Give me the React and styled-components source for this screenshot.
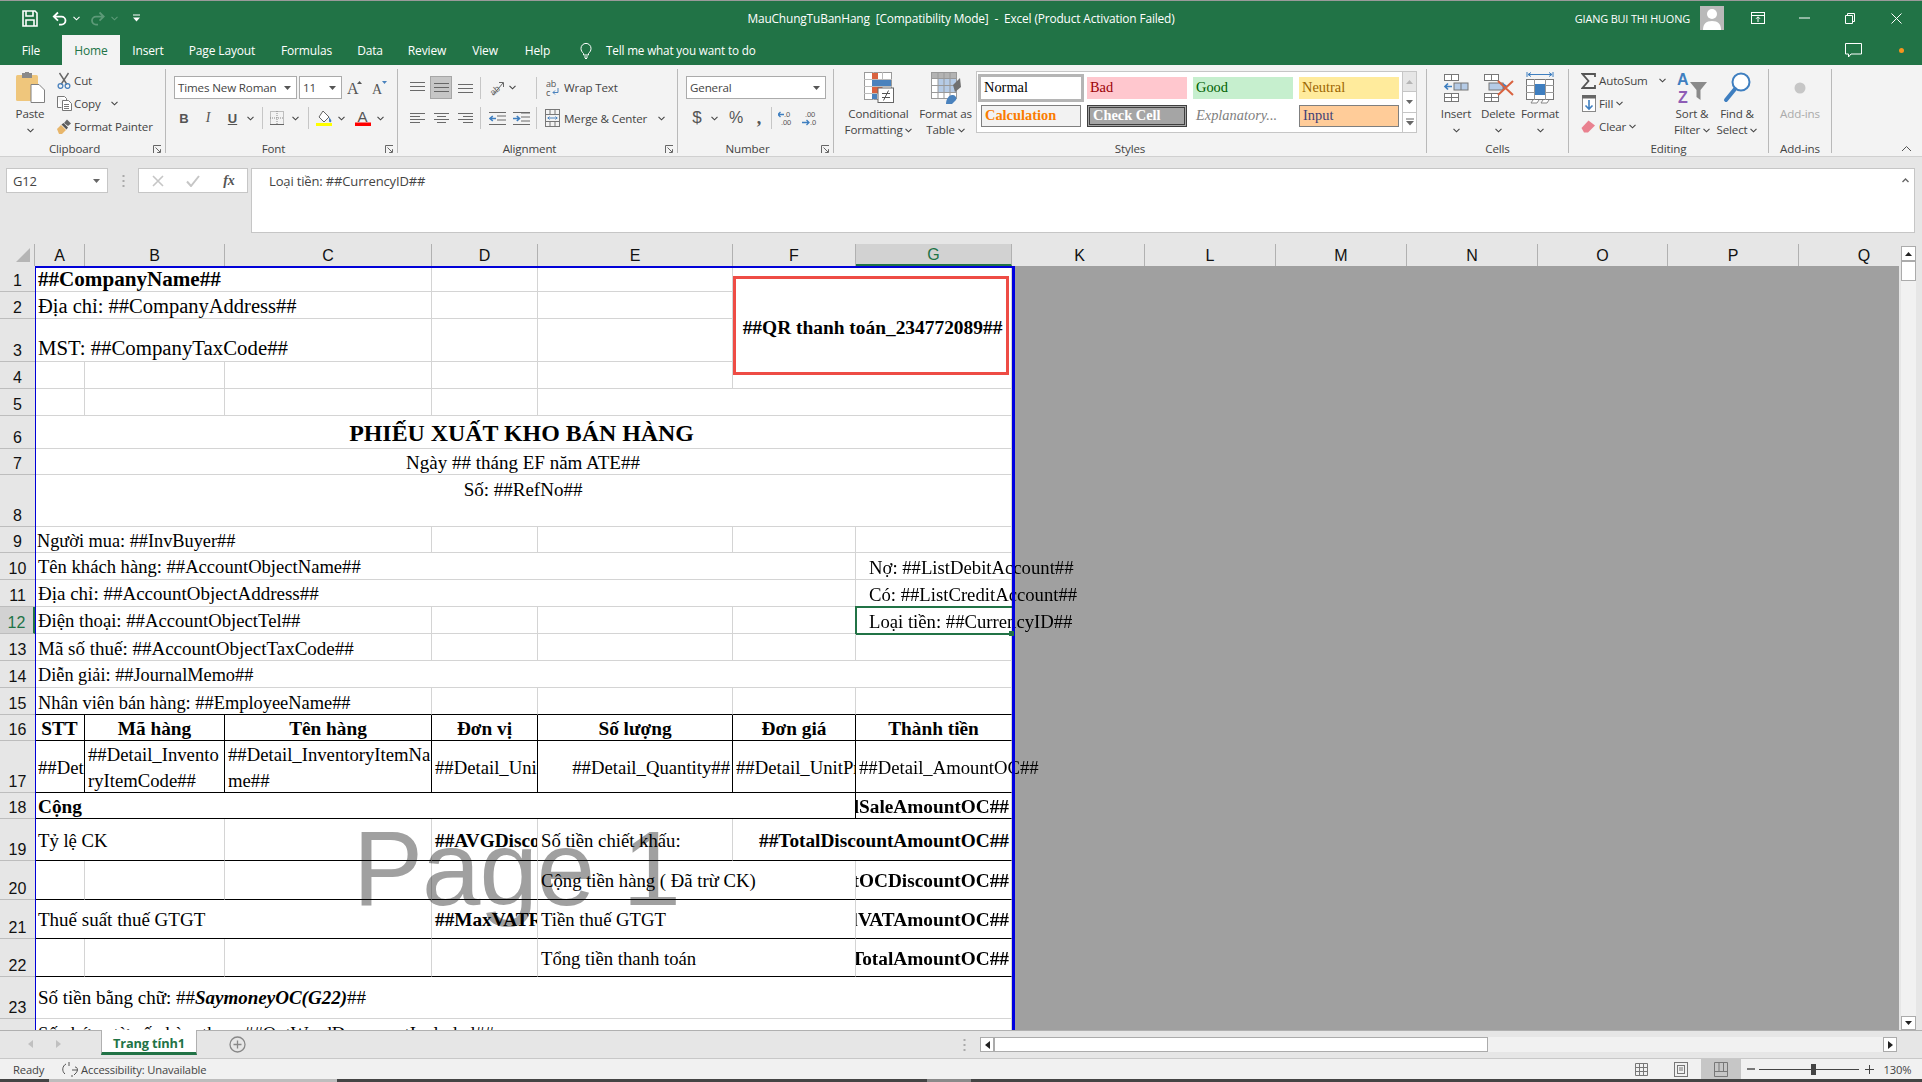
import React from 'react';
import styled, { createGlobalStyle } from 'styled-components';

const Global = createGlobalStyle`
  html, body { margin: 0; padding: 0; background: #e6e6e6; }
  * { box-sizing: border-box; }
`;
const UI = `"Open Sans", "Noto Sans", sans-serif`;
const SERIF = `"Liberation Serif", "Times New Roman", serif`;
const ARIAL = `"Liberation Sans", Arial, sans-serif`;
const GREEN = '#217346';

const Page = styled.div`
  width: 1922px; height: 1082px; display: flex; flex-direction: column; overflow: hidden;
  font-family: ${UI}; font-size: 11.6px; color: #444; letter-spacing: -0.15px;
`;
/* ---------- title bar ---------- */
const TitleBar = styled.div`
  height: 35px; flex: none; background: ${GREEN}; color: #fff; border-top: 1px solid #9a9a9a;
  display: grid; grid-template-columns: 1fr auto 1fr; align-items: center;
`;
const Qat = styled.div`display: flex; align-items: center; padding-left: 22px;`;
const Slot = styled.div`
  width: ${p => p.$w}px; flex: none; display: flex; align-items: center; justify-content: center;
  margin-left: ${p => p.$ml || 0}px; height: ${p => p.$h ? p.$h + 'px' : 'auto'};
`;
const Title = styled.div`white-space: pre; font-size: 11.9px; padding-bottom: 1px;`;
const TitleRight = styled.div`display: flex; align-items: center; justify-content: flex-end; height: 100%;`;
const UserName = styled.div`font-size: 10.9px; margin-right: 10px;`;
const Avatar = styled.div`width: 24px; height: 24px; background: #b9b9b9; margin-right: 11px; display: flex;`;
/* ---------- tab row ---------- */
const TabRow = styled.div`height: 30px; flex: none; background: ${GREEN}; display: flex; align-items: stretch;`;
const Tab = styled.div`
  width: ${p => p.$w}px; flex: none; display: flex; align-items: center; justify-content: center; font-size: 12px;
  color: ${p => p.$on ? GREEN : '#fff'}; background: ${p => p.$on ? '#f3f3f3' : 'transparent'};
`;
const TellMe = styled.div`display: flex; align-items: center; color: #fff; font-size: 11.7px; flex: 1;`;
const RowEnd = styled.div`display: flex; align-items: center; padding-right: 18px; gap: 37px;`;
const Dot = styled.div`width: 5px; height: 5px; border-radius: 50%; background: #f7941d;`;
/* ---------- ribbon ---------- */
const Ribbon = styled.div`
  height: 92px; flex: none; background: #f3f3f3; border-bottom: 1px solid #d0d0d0;
  display: flex; align-items: flex-start; padding-top: 4px;
`;
const Group = styled.div`
  width: ${p => p.$w}px; height: 84px; flex: none; display: flex; flex-direction: column;
  border-right: 1px solid #b9b9b9;
`;
const GroupBody = styled.div`height: 72px; flex: none; display: flex; padding-left: ${p => p.$pl || 0}px;`;
const GroupLabel = styled.div`
  height: 16px; margin-bottom: -4px; display: flex; align-items: center; line-height: 16px;
`;
const LabelText = styled.div`flex: 1; text-align: center;`;
const Launcher = styled.div`width: 16px; flex: none; display: flex; justify-content: center;`;
const Stack3 = styled.div`
  display: flex; flex-direction: column; width: ${p => p.$w}px; flex: none; margin-left: ${p => p.$ml || 0}px;
`;
const SmallBtn = styled.div`height: 23px; display: flex; align-items: center; white-space: nowrap;`;
const SmallIcon = styled.div`width: ${p => p.$w}px; flex: none; display: flex; justify-content: center; align-items: center;`;
const BigBtn = styled.div`
  width: ${p => p.$w}px; flex: none; display: flex; flex-direction: column; align-items: center;
  line-height: 16px; text-align: center; white-space: nowrap; color: ${p => p.$off ? '#aaa' : 'inherit'};
`;
const BigIcon = styled.div`height: 37px; flex: none; display: flex; align-items: center; justify-content: center;`;
const Tools = styled.div`display: flex; flex-direction: column; padding-top: 7px;`;
const ToolRow = styled.div`
  display: flex; align-items: center; height: ${p => p.$h || 22}px; margin-top: ${p => p.$mt || 0}px; white-space: nowrap;
`;
const ToolText = styled.div`flex: none; margin-left: -1px;`;
const Select = styled.div`
  width: ${p => p.$w}px; height: 23px; flex: none; background: #fff; border: 1px solid #ababab;
  margin-right: ${p => p.$mr || 0}px; display: flex; align-items: center; justify-content: space-between; padding: 0 5px 0 3px;
`;
const Sep = styled.div`
  width: 1px; height: 22px; background: #c6c6c6; flex: none;
  margin: 0 ${p => p.$mr ?? 3}px 0 ${p => p.$ml ?? 3}px;
`;
const ActiveBox = styled.div`
  width: 22px; height: 23px; margin: 0 1px; background: #c6c6c6; border: 1px solid #a6a6a6; display: flex; align-items: center; justify-content: center;
`;
const Glyph = styled.span`
  font-family: ${p => p.$serif ? SERIF : ARIAL}; font-weight: ${p => p.$b ? 700 : 400}; font-style: ${p => p.$i ? 'italic' : 'normal'};
  font-size: ${p => p.$s || 13}px; color: ${p => p.$c || '#555'}; text-decoration: ${p => p.$u ? 'underline' : 'none'}; letter-spacing: 0;
`;
const Gallery = styled.div`
  width: 441px; height: 62px; flex: none; margin: 2px 0 0 1px; background: #fff; border: 1px solid #c6c6c6;
  display: flex; padding-left: 4px;
`;
const StyleGrid = styled.div`
  display: grid; grid-template-columns: repeat(4, 100px); grid-auto-rows: 22px; column-gap: 6px; row-gap: 6px; padding-top: 5px; flex: none;
`;
const StyleCell = styled.div`
  font-family: ${SERIF}; font-size: 14.4px; letter-spacing: 0; display: flex; align-items: center; padding: 0 0 1px 3px;
  background: ${p => p.$bg || '#fff'}; color: ${p => p.$c || '#000'}; font-weight: ${p => p.$b ? 700 : 400};
  font-style: ${p => p.$i ? 'italic' : 'normal'}; border: ${p => p.$bd || 'none'}; white-space: nowrap;
  box-shadow: ${p => p.$sh || 'none'};
`;
const GalleryScroll = styled.div`
  margin-left: auto; width: 14px; display: flex; flex-direction: column; flex: none;
`;
const ScrollBtn = styled.div`
  flex: 1; border-left: 1px solid #c6c6c6; border-bottom: 1px solid #c6c6c6; background: ${p => p.$off ? '#e6e6e6' : '#fff'};
  display: flex; align-items: center; justify-content: center; &:last-child { border-bottom: 0; }
`;
const Collapse = styled.div`margin: 0 10px 0 auto; align-self: flex-end; padding-bottom: 4px; display: flex;`;
/* ---------- formula bar ---------- */
const FormulaArea = styled.div`
  height: 87px; flex: none; background: #e6e6e6; display: flex; align-items: flex-start; padding: 11px 7px 0 6px;
`;
const NameBox = styled.div`
  width: 102px; height: 25px; flex: none; background: #fff; border: 1px solid #c6c6c6; display: flex; align-items: center;
  justify-content: space-between; padding: 0 7px 0 6px; font-size: 13px;
`;
const GripDots = styled.div`width: 30px; flex: none; height: 25px; display: flex; align-items: center; justify-content: center;`;
const FxBox = styled.div`
  width: 110px; height: 25px; flex: none; background: #fff; border: 1px solid #c6c6c6; display: flex; align-items: center; margin-right: 3px;
`;
const FormulaInput = styled.div`
  flex: 1; height: 65px; background: #fff; border: 1px solid #c6c6c6; padding: 4px 5px 0 17px; display: flex; justify-content: space-between;
  font-size: 13px; line-height: 16px;
`;
/* ---------- sheet ---------- */
const SheetArea = styled.div`height: 786px; flex: none; display: flex; background: #e6e6e6;`;
const SheetMain = styled.div`width: 1899px; flex: none; display: flex; flex-direction: column; overflow: hidden;`;
const HeadRow = styled.div`height: 22px; flex: none; display: flex; background: #e6e6e6; overflow: hidden;`;
const Corner = styled.div`width: 35px; flex: none; display: flex; justify-content: flex-end; align-items: center; padding-right: 4px; border-right: 1px solid #b1b1b1;`;
const ColHead = styled.div`
  width: ${p => p.$w}px; flex: none; display: flex; align-items: center; justify-content: center; padding-top: 2px;
  font-family: ${ARIAL}; font-size: 16px; letter-spacing: 0; color: ${p => p.$on ? GREEN : '#111'}; border-right: 1px solid #b1b1b1;
  background: ${p => p.$on ? '#d2d2d2' : 'transparent'};
  border-bottom: ${p => p.$on ? `2px solid ${GREEN}` : 'none'};
`;
const HeadGap = styled.div`width: 3px; flex: none;`;
const Body = styled.div`flex: 1; display: flex; min-height: 0; overflow: hidden;`;
const RowHeads = styled.div`width: 35px; flex: none; display: flex; flex-direction: column;`;
const RowHead = styled.div`
  height: ${p => p.$h}px; flex: none; display: flex; align-items: flex-end; justify-content: center; padding-bottom: 0;
  font-family: ${ARIAL}; font-size: 16px; letter-spacing: 0; line-height: 20px; color: ${p => p.$on ? GREEN : '#111'};
  border-bottom: 1px solid #bdbdbd; background: ${p => p.$on ? '#d2d2d2' : 'transparent'};
  border-right: ${p => p.$on ? `2px solid ${GREEN}` : '0'};
`;
const PrintArea = styled.div`
  width: 980px; flex: none; position: relative; z-index: 1; background: #fff; padding-right: 3px;
  &::after {
    content: ''; position: absolute; inset: 0; z-index: 2; pointer-events: none;
    border-left: 1px solid #0000d8; border-top: 2px solid #0000d8; border-right: 3px solid #0000e0;
  }
`;
const Cells = styled.div`
  display: grid; font-family: ${SERIF}; font-size: 18.7px; line-height: 26px; letter-spacing: 0; color: #000;
  grid-template-columns: 50px 140px 207px 106px 195px 123px 156px;
  grid-template-rows: ${p => p.$rows};
`;
const Cell = styled.div`
  grid-column: ${p => p.$c} / span ${p => p.$s || 1};
  grid-row: ${p => p.$r} / span ${p => p.$rs || 1};
  min-width: 0; position: relative; display: flex; white-space: pre;
  align-items: ${p => p.$v || 'center'};
  justify-content: ${p => p.$h || 'flex-start'};
  padding: ${p => p.$pad || (p.$h === 'flex-end' ? '2px 2px 0 3px' : '2px 3px 0')};
  overflow: ${p => p.$over ? 'visible' : 'hidden'};
  font-weight: ${p => p.$b ? 700 : 400};
  font-size: ${p => p.$fs ? p.$fs : p.$b ? 19.3 : 18.7}px;
  border-right: 1px solid ${p => p.$kr ? '#000' : '#d4d4d4'};
  border-bottom: 1px solid ${p => p.$kb ? '#000' : '#d4d4d4'};
`;
const Selection = styled.div`
  position: absolute; left: -1px; right: -3px; top: -1px; bottom: -2px; border: 2px solid ${GREEN};
`;
const Handle = styled.div`
  position: absolute; right: -3px; bottom: -3px; width: 5px; height: 5px; background: ${GREEN}; z-index: 3;
`;
const QrBox = styled.div`
  flex: 1; border: 3px solid #ee4c45; display: flex; align-items: center; justify-content: center;
  font-weight: 700; font-size: 19.4px; padding: 4px 0 0 3px;
`;
const MoneyWord = styled.span`font-weight: 700; font-style: italic;`;
const Watermark = styled.div`
  position: absolute; left: 318px; top: 550px; font-family: ${ARIAL}; font-size: 105px; line-height: 105px; letter-spacing: -1px;
  color: #a0a0a0; mix-blend-mode: multiply; white-space: pre; pointer-events: none; z-index: 1;
`;
const Outside = styled.div`flex: 1; background: #a0a0a0;`;
const VScroll = styled.div`width: 23px; flex: none; padding: 2px 6px 0 2px; display: flex; flex-direction: column; background: #e6e6e6;`;
const VTrack = styled.div`flex: 1; background: #f1f1f1;`;
const VBtn = styled.div`
  height: ${p => p.$h || 15}px; flex: none; background: #fff; border: 1px solid #ababab; display: flex; align-items: center; justify-content: center;
`;
/* ---------- tabs + status ---------- */
const SheetTabs = styled.div`
  height: 28px; flex: none; background: #e6e6e6; border-top: 1px solid #b0b0b0; display: flex; align-items: flex-start;
`;
const SheetTab = styled.div`
  width: 96px; height: 25px; flex: none; background: #fff; border-left: 1px solid #b0b0b0; border-right: 1px solid #b0b0b0; border-bottom: 3px solid ${GREEN};
  color: ${GREEN}; font-weight: 700; font-size: 12.8px; display: flex; align-items: center; justify-content: center;
  margin: -1px 0 0 0; padding-top: 3px;
`;
const HBar = styled.div`
  width: 917px; height: 15px; margin-top: 6px; flex: none; display: flex; background: #f1f1f1;
`;
const HBtn = styled.div`width: 14px; flex: none; background: #fff; border: 1px solid #ababab; display: flex; align-items: center; justify-content: center;`;
const HThumb = styled.div`width: 494px; flex: none; background: #fff; border: 1px solid #ababab;`;
const Status = styled.div`
  height: 21px; flex: none; background: #f1f1f1; border-top: 1px solid #c8c8c8; display: flex; align-items: center; font-size: 11.2px;
`;
const StatusText = styled.div`margin-left: ${p => p.$ml || 0}px; white-space: nowrap;`;
const ViewBtn = styled.div`
  width: 40px; align-self: stretch; flex: none; display: flex; align-items: center; justify-content: center; background: ${p => p.$on ? '#c6c6c6' : 'transparent'};
`;
const Zoomer = styled.div`width: 100px; height: 1px; background: #444; position: relative; flex: none;`;
const ZoomThumb = styled.div`position: absolute; left: 52px; top: -5px; width: 5px; height: 11px; background: #444;`;
const BottomStrip = styled.div`
  height: 3px; flex: none;
  background: linear-gradient(to right, #444 0 49px, #bdbdbd 49px 337px, #444 337px 927px, #8a8a8a 927px 971px, #444 971px);
`;

/* ---------- icons ---------- */
const S = ({ w, h, vb, children, ...r }) => <svg width={w} height={h} viewBox={vb || `0 0 ${w} ${h}`} style={{ display: 'block', flex: 'none' }} {...r}>{children}</svg>;
const Chev = ({ c = '#444' }) => <S w={7} h={5}><polyline points="0.5,0.8 3.5,3.8 6.5,0.8" fill="none" stroke={c} strokeWidth="1.1" /></S>;
const Tri = ({ c = '#555', dir = 'down', w = 7, h = 4 }) => (
  <S w={w} h={h}><polygon points={dir === 'down' ? `0,0 ${w},0 ${w / 2},${h}` : `0,${h} ${w},${h} ${w / 2},0`} fill={c} /></S>
);
const Lines = ({ rows, c = '#6a6a6a', w = 15, h = 11 }) => (
  <S w={w} h={h}>{rows.map((r, i) => <line key={i} x1={r[0]} x2={r[1]} y1={r[2] + 0.5} y2={r[2] + 0.5} stroke={c} />)}</S>
);
const SaveI = () => <S w={16} h={17}><path d="M1 1h12l2 2v13H1z M4 1v5h7V1 M4 16v-6h8v6" fill="none" stroke="#fff" strokeWidth="1.6" /></S>;
const UndoI = ({ c = '#fff' }) => <S w={16} h={15}><path d="M6 1.5L1.8 5.6 6 9.7M2 5.6h7.5a4 4 0 0 1 0 8H7" fill="none" stroke={c} strokeWidth="1.8" /></S>;
const RedoI = () => <S w={15} h={15}><path d="M9.5 1.5l4.2 4.1-4.2 4.1M13.5 5.6H6a4 4 0 0 0 0 8h2" fill="none" stroke="#5d9a78" strokeWidth="1.8" /></S>;
const QatMore = () => <S w={7} h={8}><line x1="0" x2="7" y1="1" y2="1" stroke="#fff" /><polygon points="0,3.5 7,3.5 3.5,7.5" fill="#fff" /></S>;
const RibbonDisp = () => <S w={14} h={12}><rect x="0.5" y="0.5" width="13" height="11" fill="none" stroke="#fff" /><line x1="0" x2="14" y1="3.5" y2="3.5" stroke="#fff" /><path d="M7 10V5M5 6.8L7 4.8l2 2" fill="none" stroke="#fff" /></S>;
const MinI = () => <S w={11} h={2}><line x1="0" x2="11" y1="1" y2="1" stroke="#fff" /></S>;
const RestI = () => <S w={10} h={11}><path d="M2.5 2.5V.5h7v8H7.5M.5 2.5h7v8h-7z" fill="none" stroke="#fff" /></S>;
const CloseI = () => <S w={11} h={11}><path d="M.5.5l10 10M10.5.5l-10 10" stroke="#fff" /></S>;
const BulbI = () => <S w={12} h={17}><path d="M3.5 11.5C2 10 1 8.6 1 6.4a5 5 0 0 1 10 0c0 2.2-1 3.6-2.5 5.1V13h-5zM4 15h4M5 16.5h2" fill="none" stroke="#fff" /></S>;
const ChatI = () => <S w={17} h={15}><path d="M.5.5h16v10.5H6L3.5 14v-3H.5z" fill="none" stroke="#fff" /></S>;
const PasteI = () => (
  <S w={29} h={31}>
    <rect x="0" y="3" width="22" height="26" rx="1.5" fill="#efc67c" />
    <rect x="6" y="1" width="10" height="5" fill="#8a8a8a" /><rect x="9" y="0" width="4" height="2" fill="#8a8a8a" />
    <path d="M15 12.5h8l5.5 5.5v12.5H15z" fill="#fff" stroke="#808080" />
  </S>
);
const CutI = () => <S w={14} h={17}><path d="M2.5 1l7.5 11.5M11.5 1L4 12.5" stroke="#666" strokeWidth="1.4" fill="none" /><circle cx="3.5" cy="14" r="2.4" fill="none" stroke="#4a82bd" strokeWidth="1.3" /><circle cx="10.5" cy="14" r="2.4" fill="none" stroke="#4a82bd" strokeWidth="1.3" /></S>;
const CopyI = () => <S w={15} h={15}><path d="M.5.5h7l2 2v2M.5.5v11h4" fill="#fff" stroke="#777" /><path d="M5.5 4.5h6l3 3v7h-9z" fill="#fff" stroke="#777" /><path d="M7 8.5h5M7 10.5h5M7 12.5h5" stroke="#777" /></S>;
const PainterI = () => <S w={16} h={15}><path d="M1 10l4-4 5 5-4 4H3z" fill="#e8b66b" /><path d="M5.5 5.5l5 5 1.5-2-4.5-4.5z" fill="#555" /><path d="M8 4l3-3.5 4 4L12 7" fill="#666" /></S>;
const Launch = () => <S w={9} h={9}><path d="M.5 8V.5H8M2.5 2.5L7 7M4.2 7.5h3.3V4.2" fill="none" stroke="#666" /></S>;
const GrowA = ({ up }) => (
  <S w={16} h={15}>
    <text x="0" y="14" fontFamily={SERIF} fontSize={up ? 16 : 14} fill="#555">A</text>
    <polygon points={up ? '10,4 15,4 12.5,1' : '10,1 15,1 12.5,4'} fill={up ? '#555' : '#4a82bd'} />
  </S>
);
const BorderI = () => <S w={14} h={14}><rect x=".5" y=".5" width="13" height="13" fill="none" stroke="#888" strokeDasharray="1 1" /><path d="M7 0v13M0 7h13" stroke="#888" strokeDasharray="1 1" /><line x1="0" x2="14" y1="13.5" y2="13.5" stroke="#666" /></S>;
const FillI = () => <S w={17} h={16}><path d="M7 1l6 6-5 5-5-5z" fill="#fff" stroke="#666" /><path d="M13 7c2 2.5 3 3.5 2 5-1 .8-2.4 0-2-1.7z" fill="#4a82bd" /><rect x="0" y="13" width="16" height="3.5" fill="#ffff00" /></S>;
const ColorA = () => <S w={16} h={16}><text x="2.5" y="12" fontFamily={ARIAL} fontWeight="400" fontSize="15" fill="#555">A</text><rect x="0" y="12.5" width="16" height="3.5" fill="#f00" /></S>;
const OrientI = () => <S w={16} h={16}><text x="0" y="13" fontFamily={ARIAL} fontSize="9" fill="#666" transform="rotate(-40 6 9)">ab</text><path d="M4 15L14 3M10 2.5h4.5V7" fill="none" stroke="#666" /></S>;
const WrapI = () => <S w={13} h={18}><text x="0" y="7.5" fontFamily={UI} fontSize="9" fill="#555">ab</text><text x="0" y="16.5" fontFamily={UI} fontSize="9" fill="#555">c</text><path d="M12 9v4.5H7M9 11.5l-2 2 2 2" fill="none" stroke="#4a82bd" /></S>;
const MergeI = () => <S w={15} h={18}><rect x=".5" y=".5" width="14" height="17" fill="none" stroke="#777" /><path d="M0 5.5h15M0 12.5h15M5 0v5M10 0v5M5 13v5M10 13v5" stroke="#777" /><path d="M2.5 9h10M4.5 7.5L3 9l1.5 1.5M10.5 7.5L12 9l-1.5 1.5" fill="none" stroke="#4a82bd" /></S>;
const IndentI = ({ inc }) => (
  <S w={17} h={13}>
    <path d={inc ? 'M8 1h9M8 5h9M8 9h9M0 12.5h17M0 .5h17' : 'M8 4h9M8 8h9M0 12.5h17M0 .5h17'} stroke="#6a6a6a" strokeWidth="1" />
    <path d={inc ? 'M0 6.5h6M3.8 4L6.5 6.5 3.8 9' : 'M1 6.5h6M3.8 4L1 6.5 3.8 9'} fill="none" stroke="#3f7fc0" strokeWidth="1.6" />
  </S>
);
const DecI = ({ up }) => (
  <S w={16} h={16}>
    {up ? <>
      <text x="6" y="7" fontFamily={ARIAL} fontSize="7.5" fill="#555">.0</text><text x="3" y="15" fontFamily={ARIAL} fontSize="7.5" fill="#555">.00</text>
      <path d="M6 4.5H0M2.5 2L0 4.5 2.5 7" fill="none" stroke="#3f7fc0" strokeWidth="1.3" />
    </> : <>
      <text x="3" y="7" fontFamily={ARIAL} fontSize="7.5" fill="#555">.00</text><text x="8" y="15" fontFamily={ARIAL} fontSize="7.5" fill="#555">.0</text>
      <path d="M0 12.5h7M4.5 10L7 12.5 4.5 15" fill="none" stroke="#3f7fc0" strokeWidth="1.3" />
    </>}
  </S>
);
const CondI = () => (
  <S w={30} h={31}>
    <rect x=".5" y=".5" width="27" height="27" fill="#fff" stroke="#999" />
    <path d="M9.5 0v28M18.5 0v28M0 7.5h28M0 14.5h28M0 21.5h28" stroke="#bbb" />
    <rect x="8" y="1" width="6" height="6" fill="#d9623f" /><rect x="8" y="8" width="19" height="6" fill="#4a82bd" />
    <rect x="8" y="15" width="10" height="6" fill="#d9623f" /><rect x="8" y="22" width="5" height="5" fill="#4a82bd" />
    <rect x="14" y="16" width="15.5" height="14.5" fill="#fff" stroke="#666" />
    <path d="M18 21.5h8M18 25.5h8M24.5 18.5l-5 10" stroke="#555" fill="none" />
  </S>
);
const TableI = () => (
  <S w={30} h={32}>
    <rect x=".5" y=".5" width="25" height="26" fill="#fff" stroke="#999" />
    <rect x="1" y="1" width="24" height="5" fill="#b3b3b3" /><rect x="7" y="7" width="18" height="13" fill="#b5cbe6" />
    <path d="M7 0v27M13 0v27M19 0v27M0 6.5h26M0 13.5h26M0 20.5h26" stroke="#999" />
    <path d="M22 13l7-7 1 9-6 5z" fill="#707070" />
    <path d="M15 32c0-5 3-9 6-9s5 2 4 5l-4 4z" fill="#4a82bd" />
  </S>
);
const Tbl = ({ x, y, w, h, rows = 1, cols = 2 }) => (
  <g>
    <rect x={x + .5} y={y + .5} width={w} height={h} fill="#fff" stroke="#777" />
    {Array.from({ length: cols - 1 }).map((_, i) => <line key={i} x1={x + .5 + (w / cols) * (i + 1)} x2={x + .5 + (w / cols) * (i + 1)} y1={y} y2={y + h} stroke="#777" />)}
    {Array.from({ length: rows - 1 }).map((_, i) => <line key={i} x1={x} x2={x + w} y1={y + .5 + (h / rows) * (i + 1)} y2={y + .5 + (h / rows) * (i + 1)} stroke="#777" />)}
  </g>
);
const InsertI = () => (
  <S w={27} h={29}>
    <Tbl x={1} y={1} w={14} h={6} /><Tbl x={1} y={20} w={14} h={8} rows={2} />
    <rect x="11" y="10" width="14" height="7" fill="#b5cbe6" stroke="#777" /><line x1="18" x2="18" y1="10" y2="17" stroke="#777" />
    <path d="M9 13.5H2M5 10.5l-3 3 3 3" fill="none" stroke="#3f7fc0" strokeWidth="1.7" />
  </S>
);
const DeleteI = () => (
  <S w={31} h={29}>
    <Tbl x={1} y={1} w={14} h={6} /><Tbl x={1} y={20} w={14} h={8} rows={2} />
    <rect x="6" y="10" width="14" height="7" fill="#b5cbe6" stroke="#777" /><polygon points="20,10 25,13.5 20,17" fill="#3f7fc0" />
    <path d="M15 8l15 14M30 8L15 22" stroke="#d9623f" strokeWidth="2" />
  </S>
);
const FormatI = () => (
  <S w={28} h={32}>
    <path d="M1 0v5M27 0v5M2 2.5h24M5 .5L2 2.5l3 2M23 .5l3 2-3 2" fill="none" stroke="#3f7fc0" />
    <rect x=".5" y="7.5" width="27" height="20" fill="#fff" stroke="#777" />
    <path d="M8.5 7v21M19.5 7v21M0 13.5h28M0 20.5h28" stroke="#999" />
    <rect x="9" y="12" width="10" height="11" fill="#3f7fc0" />
    <path d="M7 28l-2 3h6l2-3M17 28l-2 3h6l2-3" fill="#fff" stroke="#888" />
  </S>
);
const SumI = () => <S w={15} h={16}><path d="M14 4V1H1.5l6 7-6 7H14v-3" fill="none" stroke="#555" strokeWidth="1.8" /></S>;
const FillDown = () => <S w={14} h={17}><rect x=".5" y=".5" width="13" height="16" fill="#fff" stroke="#888" /><rect x="0" y="0" width="14" height="3.5" fill="#666" /><path d="M7 5v9M3.5 10.5L7 14l3.5-3.5" fill="none" stroke="#3f7fc0" strokeWidth="1.6" /></S>;
const EraserI = () => <S w={15} h={13}><path d="M.5 8l7-7.5 6.5 5-7 7H3z" fill="#e9818f" /></S>;
const SortI = () => (
  <S w={31} h={34}>
    <text x="0" y="14" fontFamily={ARIAL} fontWeight="700" fontSize="16" fill="#3f7fc0">A</text>
    <text x="1" y="32" fontFamily={ARIAL} fontWeight="700" fontSize="16" fill="#8e5cb5">Z</text>
    <path d="M13 11h17l-6.5 8v10l-4-3v-7z" fill="#8a8a8a" />
  </S>
);
const FindI = () => <S w={29} h={33}><circle cx="18" cy="11" r="8.5" fill="#fff" stroke="#3f7fc0" strokeWidth="2" /><path d="M12 18L3 29" stroke="#3f7fc0" strokeWidth="4" strokeLinecap="round" /></S>;
const DotI = () => <S w={12} h={12}><circle cx="6" cy="6" r="5.5" fill="#c6c6c6" /></S>;
const CornerI = () => <S w={14} h={14}><polygon points="14,0 14,14 0,14" fill="#b5b5b5" /></S>;
const XI = () => <S w={12} h={12}><path d="M1 1l10 10M11 1L1 11" stroke="#c6c6c6" strokeWidth="1.6" /></S>;
const CheckI = () => <S w={14} h={12}><path d="M1 6.5L5 11 13 1" stroke="#c6c6c6" strokeWidth="2" fill="none" /></S>;
const Grip = () => <S w={3} h={12}><path d="M1.5 0v2M1.5 5v2M1.5 10v2" stroke="#aaa" strokeWidth="2" /></S>;
const PlusCircle = () => <S w={17} h={17}><circle cx="8.5" cy="8.5" r="7.5" fill="none" stroke="#888" strokeWidth="1.3" /><path d="M8.5 4.5v8M4.5 8.5h8" stroke="#888" strokeWidth="1.3" /></S>;
const AccI = () => <S w={17} h={15}><path d="M4 2A6 6 0 0 0 3 12M13 5c3 0 3 4 1 6l-2 2M10 8h6M10 13v2M7 0v4" fill="none" stroke="#555" /></S>;
const NormalV = () => <S w={13} h={13}><path d="M.5.5h12v12H.5zM4.5 0v13M8.5 0v13M0 4.5h13M0 8.5h13" fill="none" stroke="#777" /></S>;
const LayoutV = () => <S w={14} h={15}><rect x=".5" y=".5" width="13" height="14" fill="none" stroke="#777" /><rect x="3.5" y="3.5" width="7" height="8" fill="none" stroke="#777" /><path d="M5 6h4M5 8h4" stroke="#777" /></S>;
const BreakV = () => <S w={14} h={15}><path d="M.5.5h13v14H.5zM0 9.5h14M5 0v9M9.5 0v9" fill="none" stroke="#777" /></S>;

/* ---------- data ---------- */
const tabs = [['File', 62], ['Home', 58, true], ['Insert', 56], ['Page Layout', 92], ['Formulas', 77], ['Data', 50], ['Review', 64], ['View', 52], ['Help', 53]];
const cols = [['A', 50], ['B', 140], ['C', 207], ['D', 106], ['E', 195], ['F', 123], ['G', 156, true]];
const cols2 = [['K', 130], ['L', 131], ['M', 131], ['N', 131], ['O', 130], ['P', 131], ['Q', 131]];
const heights = [26, 27, 43, 27, 27, 33, 26, 52, 26, 27, 27, 27, 27, 27, 27, 26, 52, 26, 42, 39, 39, 38, 42, 40];
const rowTemplate = heights.map(h => h + 'px').join(' ');

const k = { $kb: true };
const kk = { $kb: true, $kr: true };
const B = { $b: true };
const R = { $h: 'flex-end' };
const C = { $h: 'center' };
const layout = [
  [1, [[1, 3, '##CompanyName##', { ...B, $fs: 21.1, $pad: '0 3px' }], [4], [5]]],
  [2, [[1, 3, 'Địa chỉ: ##CompanyAddress##', { $fs: 20.5 }], [4], [5]]],
  [3, [[1, 3, 'MST: ##CompanyTaxCode##', { $v: 'flex-end', $fs: 20.8, $pad: '0 3px' }], [4], [5]]],
  [4, [[1], [2], [3], [4], [5]]],
  [5, [[1], [2], [3], [4], [5, 3]]],
  [6, [[1, 7, 'PHIẾU XUẤT KHO BÁN HÀNG', { ...B, ...C, $fs: 23.9, $pad: '2px 6px 0 3px' }]]],
  [7, [[1, 7, 'Ngày ## tháng EF năm ATE##', { ...C, $fs: 19 }]]],
  [8, [[1, 7, 'Số: ##RefNo##', { ...C, $v: 'flex-start', $fs: 19 }]]],
  [9, [[1, 3, 'Người mua: ##InvBuyer##', { $pad: '2px 2px 0', $fs: 18.3 }], [4], [5], [6], [7]]],
  [10, [[1, 6, 'Tên khách hàng: ##AccountObjectName##', { $fs: 18.6 }], [7, 1, 'Nợ: ##ListDebitAccount##', { $over: true, $pad: '3px 0 0 13px' }]]],
  [11, [[1, 6, 'Địa chỉ: ##AccountObjectAddress##', { $fs: 19 }], [7, 1, 'Có: ##ListCreditAccount##', { $over: true, $pad: '3px 0 0 13px' }]]],
  [12, [[1, 3, 'Điện thoại: ##AccountObjectTel##'], [4], [5], [6], [7, 1, 'Loại tiền: ##CurrencyID##', { $over: true, $pad: '3px 0 0 13px', sel: true }]]],
  [13, [[1, 3, 'Mã số thuế: ##AccountObjectTaxCode##', { $fs: 19, $pad: '3px 3px 0' }], [4], [5], [6], [7]]],
  [14, [[1, 7, 'Diễn giải: ##JournalMemo##', { $fs: 18.3 }]]],
  [15, [[1, 3, 'Nhân viên bán hàng: ##EmployeeName##', { ...k, $fs: 18.4, $pad: '3px 3px 0' }], [4, 1, '', k], [5, 1, '', k], [6, 1, '', k], [7, 1, '', k]]],
  [16, [[1, 1, 'STT', { ...kk, ...B, ...C, $pad: '3px 3px 0' }], [2, 1, 'Mã hàng', { ...kk, ...B, ...C, $pad: '3px 3px 0' }], [3, 1, 'Tên hàng', { ...kk, ...B, ...C, $pad: '3px 3px 0' }], [4, 1, 'Đơn vị', { ...kk, ...B, ...C, $pad: '3px 3px 0' }], [5, 1, 'Số lượng', { ...kk, ...B, ...C, $pad: '3px 3px 0' }], [6, 1, 'Đơn giá', { ...kk, ...B, ...C, $pad: '3px 3px 0' }], [7, 1, 'Thành tiền', { ...k, ...B, ...C, $pad: '3px 3px 0' }]]],
  [17, [[1, 1, '##Detail_Order##', kk], [2, 1, '##Detail_Invento\nryItemCode##', kk], [3, 1, '##Detail_InventoryItemNa\nme##', kk], [4, 1, '##Detail_Unit##', kk], [5, 1, '##Detail_Quantity##', { ...kk, ...R }], [6, 1, '##Detail_UnitPrice##', kk], [7, 1, '##Detail_AmountOC##', { ...k, $over: true }]]],
  [18, [[1, 6, 'Cộng', { ...kk, ...B, $pad: '3px 3px 0' }], [7, 1, '##TotalSaleAmountOC##', { ...k, ...B, ...R }]]],
  [19, [[1, 2, 'Tỷ lệ CK', k], [3, 1, '', k], [4, 1, '##AVGDiscountRate##', { ...k, ...B }], [5, 1, 'Số tiền chiết khấu:', k], [6, 2, '##TotalDiscountAmountOC##', { ...k, ...B, ...R }]]],
  [20, [[1, 1, '', k], [2, 1, '', k], [3, 1, '', k], [4, 1, '', k], [5, 2, 'Cộng tiền hàng ( Đã trừ CK)', k], [7, 1, '##TotalAmountOCDiscountOC##', { ...k, ...B, ...R }]]],
  [21, [[1, 3, 'Thuế suất thuế GTGT', { ...k, $fs: 19 }], [4, 1, '##MaxVATRate##', { ...k, ...B }], [5, 2, 'Tiền thuế GTGT', k], [7, 1, '##TotalVATAmountOC##', { ...k, ...B, ...R }]]],
  [22, [[1, 1, '', k], [2, 1, '', k], [3, 1, '', k], [4, 1, '', k], [5, 2, 'Tổng tiền thanh toán', k], [7, 1, '##TotalAmountOC##', { ...k, ...B, ...R }]]],
];

const Small = ({ icon, w, children, chev, gap }) => (
  <SmallBtn>
    <SmallIcon $w={w}>{icon}</SmallIcon>
    {children}
    {chev && <Slot $w={7} $ml={gap}><Chev /></Slot>}
  </SmallBtn>
);
const ChevWrap = styled.span`display: inline-block; vertical-align: middle; line-height: 0;`;
const Chev2 = () => <ChevWrap><Chev /></ChevWrap>;
const Big = ({ w, icon, l1, l2, off, chev }) => (
  <BigBtn $w={w} $off={off}>
    <BigIcon>{icon}</BigIcon>
    <div>{l1}</div>
    <div>{l2}{l2 && chev && ' '}{chev && <Chev2 />}</div>
  </BigBtn>
);

export default function App() {
  return (
    <Page>
      <Global />
      <TitleBar>
        <Qat>
          <SaveI />
          <Slot $w={26} $ml={9}><UndoI /></Slot>
          <Slot $w={7}><Chev c="#fff" /></Slot>
          <Slot $w={22} $ml={6}><RedoI /></Slot>
          <Slot $w={13}><Chev c="#5d9a78" /></Slot>
          <Slot $w={7} $ml={12}><QatMore /></Slot>
        </Qat>
        <Title>{'MauChungTuBanHang  [Compatibility Mode]  -  Excel (Product Activation Failed)'}</Title>
        <TitleRight>
          <UserName>GIANG BUI THI HUONG</UserName>
          <Avatar>
            <S w={24} h={24}><circle cx="12" cy="8" r="5" fill="#fff" /><path d="M3 24c0-6 3-9 9-9s9 3 9 9z" fill="#fff" /></S>
          </Avatar>
          <Slot $w={46} $h={24}><RibbonDisp /></Slot>
          <Slot $w={46} $h={24}><MinI /></Slot>
          <Slot $w={46} $h={24}><RestI /></Slot>
          <Slot $w={46} $h={24}><CloseI /></Slot>
          <Slot $w={3} />
        </TitleRight>
      </TitleBar>

      <TabRow>
        {tabs.map(([t, w, on]) => <Tab key={t} $w={w} $on={on}>{t}</Tab>)}
        <TellMe>
          <Slot $w={16} $ml={14}><BulbI /></Slot>
          <Slot $w={12} />
          Tell me what you want to do
        </TellMe>
        <RowEnd><ChatI /><Dot /></RowEnd>
      </TabRow>

      <Ribbon>
        <Group $w={166}>
          <GroupBody>
            <BigBtn $w={60}>
              <BigIcon><Slot $w={68}><PasteI /></Slot></BigIcon>
              <div>Paste</div>
              <Slot $w={60} $h={16}><Chev /></Slot>
            </BigBtn>
            <Stack3 $w={112} $ml={-6}>
              <Small w={20} icon={<CutI />}>Cut</Small>
              <Small w={20} icon={<CopyI />} chev gap={10}>Copy</Small>
              <Small w={20} icon={<PainterI />}>Format Painter</Small>
            </Stack3>
          </GroupBody>
          <GroupLabel><LabelText>Clipboard</LabelText><Launcher><Launch /></Launcher></GroupLabel>
        </Group>

        <Group $w={232}>
          <GroupBody $pl={8}>
            <Tools>
              <ToolRow $h={23}>
                <Select $w={123} $mr={2}>Times New Roman<Tri /></Select>
                <Select $w={43}>11<Tri /></Select>
                <Slot $w={26}><GrowA up /></Slot>
                <Slot $w={24}><GrowA /></Slot>
              </ToolRow>
              <ToolRow $mt={8}>
                <Slot $w={24} $ml={-2}><Glyph $b $s={13}>B</Glyph></Slot>
                <Slot $w={24}><Glyph $i $serif $s={14}>I</Glyph></Slot>
                <Slot $w={25}><Glyph $b $u $s={13}>U</Glyph></Slot>
                <Slot $w={10}><Chev /></Slot>
                <Sep $ml={7} $mr={7} />
                <Slot $w={14}><BorderI /></Slot>
                <Slot $w={22}><Chev /></Slot>
                <Sep $ml={2} $mr={1} />
                <Slot $w={28}><FillI /></Slot>
                <Slot $w={6}><Chev /></Slot>
                <Slot $w={32} $ml={3}><ColorA /></Slot>
                <Slot $w={6} $ml={-2}><Chev /></Slot>
              </ToolRow>
            </Tools>
          </GroupBody>
          <GroupLabel><LabelText>Font</LabelText><Launcher><Launch /></Launcher></GroupLabel>
        </Group>

        <Group $w={280}>
          <GroupBody $pl={7}>
            <Tools>
              <ToolRow $h={23}>
                <Slot $w={24}><Lines h={11} rows={[[0, 15, 0], [0, 15, 4], [0, 15, 8]]} /></Slot>
                <ActiveBox><Lines rows={[[0, 15, 1], [0, 15, 5], [0, 15, 9]]} c="#666" /></ActiveBox>
                <Slot $w={24}><Lines rows={[[0, 15, 2], [0, 15, 6], [0, 15, 10]]} /></Slot>
                <Sep />
                <Slot $w={26}><OrientI /></Slot>
                <Slot $w={4}><Chev /></Slot>
                <Sep $ml={22} $mr={3} />
                <Slot $w={25}><WrapI /></Slot>
                <ToolText>Wrap Text</ToolText>
              </ToolRow>
              <ToolRow $mt={8}>
                <Slot $w={24}><Lines rows={[[0, 15, 0], [0, 10, 3], [0, 15, 6], [0, 10, 9]]} /></Slot>
                <Slot $w={24}><Lines rows={[[0, 15, 0], [3, 12, 3], [0, 15, 6], [3, 12, 9]]} /></Slot>
                <Slot $w={24}><Lines rows={[[0, 15, 0], [5, 15, 3], [0, 15, 6], [5, 15, 9]]} /></Slot>
                <Sep />
                <Slot $w={26}><IndentI /></Slot>
                <Slot $w={22}><IndentI inc /></Slot>
                <Sep $ml={4} $mr={3} />
                <Slot $w={25}><MergeI /></Slot>
                <ToolText>Merge &amp; Center</ToolText>
                <Slot $w={7} $ml={11}><Chev /></Slot>
              </ToolRow>
            </Tools>
          </GroupBody>
          <GroupLabel><LabelText>Alignment</LabelText><Launcher><Launch /></Launcher></GroupLabel>
        </Group>

        <Group $w={156}>
          <GroupBody $pl={8}>
            <Tools>
              <ToolRow $h={23}><Select $w={140}>General<Tri /></Select></ToolRow>
              <ToolRow $mt={8}>
                <Slot $w={22}><Glyph $s={17}>$</Glyph></Slot>
                <Slot $w={12}><Chev /></Slot>
                <Slot $w={32}><Glyph $s={16}>%</Glyph></Slot>
                <Slot $w={14}><Glyph $b $serif $s={18}>,</Glyph></Slot>
                <Sep $ml={5} $mr={3} />
                <Slot $w={22}><DecI up /></Slot>
                <Slot $w={25}><DecI /></Slot>
              </ToolRow>
            </Tools>
          </GroupBody>
          <GroupLabel><LabelText>Number</LabelText><Launcher><Launch /></Launcher></GroupLabel>
        </Group>

        <Group $w={593}>
          <GroupBody $pl={7}>
            <Big w={75} icon={<CondI />} l1="Conditional" l2="Formatting" chev />
            <Big w={59} icon={<TableI />} l1="Format as" l2="Table" chev />
            <Gallery>
              <StyleGrid>
                <StyleCell $sh="0 0 0 3px #b5b5b5">Normal</StyleCell>
                <StyleCell $bg="#ffc7ce" $c="#9c0006">Bad</StyleCell>
                <StyleCell $bg="#c6efce" $c="#006100">Good</StyleCell>
                <StyleCell $bg="#ffeb9c" $c="#9c6500">Neutral</StyleCell>
                <StyleCell $bg="#f2f2f2" $c="#fa7d00" $b $bd="1px solid #7f7f7f">Calculation</StyleCell>
                <StyleCell $bg="#a5a5a5" $c="#fff" $b $bd="3px double #3f3f3f">Check Cell</StyleCell>
                <StyleCell $c="#7f7f7f" $i>Explanatory...</StyleCell>
                <StyleCell $bg="#ffcc99" $c="#3f3f76" $bd="1px solid #7f7f7f">Input</StyleCell>
              </StyleGrid>
              <GalleryScroll>
                <ScrollBtn $off><Tri dir="up" c="#b5b5b5" /></ScrollBtn>
                <ScrollBtn><Tri c="#666" /></ScrollBtn>
                <ScrollBtn>
                  <S w={8} h={8}><line x1="0" x2="8" y1="1" y2="1" stroke="#666" /><polygon points="0,3 8,3 4,7.5" fill="#666" /></S>
                </ScrollBtn>
              </GalleryScroll>
            </Gallery>
          </GroupBody>
          <GroupLabel><LabelText>Styles</LabelText></GroupLabel>
        </Group>

        <Group $w={142}>
          <GroupBody $pl={8}>
            <Big w={42} icon={<InsertI />} l1="Insert" l2="" chev />
            <Big w={42} icon={<DeleteI />} l1="Delete" l2="" chev />
            <Big w={42} icon={<FormatI />} l1="Format" l2="" chev />
          </GroupBody>
          <GroupLabel><LabelText>Cells</LabelText></GroupLabel>
        </Group>

        <Group $w={200}>
          <GroupBody $pl={9}>
            <Stack3 $w={91}>
              <Small w={21} icon={<SumI />} chev gap={11}>AutoSum</Small>
              <Small w={21} icon={<FillDown />} chev gap={3}>Fill</Small>
              <Small w={21} icon={<EraserI />} chev gap={3}>Clear</Small>
            </Stack3>
            <Big w={46} icon={<SortI />} l1="Sort &" l2="Filter" chev />
            <Big w={44} icon={<FindI />} l1="Find &" l2="Select" chev />
          </GroupBody>
          <GroupLabel><LabelText>Editing</LabelText></GroupLabel>
        </Group>

        <Group $w={63}>
          <GroupBody>
            <Big w={62} off icon={<DotI />} l1="Add-ins" l2="" />
          </GroupBody>
          <GroupLabel><LabelText>Add-ins</LabelText></GroupLabel>
        </Group>

        <Collapse><S w={11} h={7}><polyline points="1,6 5.5,1.5 10,6" fill="none" stroke="#555" /></S></Collapse>
      </Ribbon>

      <FormulaArea>
        <NameBox>G12<Tri c="#666" w={7} h={4} /></NameBox>
        <GripDots><Grip /></GripDots>
        <FxBox>
          <Slot $w={19} $ml={9}><XI /></Slot>
          <Slot $w={36} $ml={8}><CheckI /></Slot>
          <Slot $w={36}><Glyph $serif $i $b $s={14} $c="#555">fx</Glyph></Slot>
        </FxBox>
        <FormulaInput>
          Loại tiền: ##CurrencyID##
          <Slot $w={8} $h={14}><S w={7} h={5}><polyline points="0.5,4 3.5,1 6.5,4" fill="none" stroke="#666" strokeWidth="1.4" /></S></Slot>
        </FormulaInput>
      </FormulaArea>

      <SheetArea>
        <SheetMain>
          <HeadRow>
            <Corner><CornerI /></Corner>
            {cols.map(([t, w, on]) => <ColHead key={t} $w={w} $on={on}>{t}</ColHead>)}
            <HeadGap />
            {cols2.map(([t, w]) => <ColHead key={t} $w={w}>{t}</ColHead>)}
          </HeadRow>
          <Body>
            <RowHeads>
              {heights.map((h, i) => <RowHead key={i} $h={h} $on={i === 11}>{i + 1}</RowHead>)}
            </RowHeads>
            <PrintArea>
              <Cells $rows={rowTemplate}>
                {layout.map(([r, list]) => list.map(([c, s, t, o = {}]) => {
                  const { sel, ...rest } = o;
                  return (
                    <Cell key={r + '-' + c} $r={r} $c={c} $s={s} {...rest}>
                      {t}
                      {sel && <><Selection /><Handle /></>}
                    </Cell>
                  );
                }))}
                <Cell $r={1} $c={6} $s={2} $rs={4} $v="stretch" $pad="10px 2px 13px 0">
                  <QrBox>##QR thanh toán_234772089##</QrBox>
                </Cell>
                <Cell $r={23} $c={1} $s={7} $fs={19} $pad="1px 3px 0">
                  <span>Số tiền bằng chữ: ##<MoneyWord>SaymoneyOC(G22)</MoneyWord>##</span>
                </Cell>
                <Cell $r={24} $c={1} $s={7} $v="flex-start">Số chứng từ gốc kèm theo: ##OutWordDocumentIncluded##</Cell>
              </Cells>
              <Watermark>Page 1</Watermark>
            </PrintArea>
            <Outside />
          </Body>
        </SheetMain>
        <VScroll>
          <VBtn><Tri c="#222" dir="up" /></VBtn>
          <VBtn $h={20} />
          <VTrack />
          <VBtn $h={14}><Tri c="#222" /></VBtn>
        </VScroll>
      </SheetArea>

      <SheetTabs>
        <Slot $w={28} $ml={16} $h={26}><S w={5} h={8}><polygon points="5,0 5,8 0,4" fill="#c0c0c0" /></S></Slot>
        <Slot $w={28} $h={26}><S w={5} h={8}><polygon points="0,0 0,8 5,4" fill="#c0c0c0" /></S></Slot>
        <Slot $w={29} />
        <SheetTab>Trang tính1</SheetTab>
        <Slot $w={17} $ml={32} $h={27}><PlusCircle /></Slot>
        <Slot $w={3} $ml={717} $h={27}><Grip /></Slot>
        <Slot $w={14} />
        <HBar>
          <HBtn><S w={5} h={8}><polygon points="5,0 5,8 0,4" fill="#222" /></S></HBtn>
          <HThumb />
          <Slot $w={395} />
          <HBtn><S w={5} h={8}><polygon points="0,0 0,8 5,4" fill="#222" /></S></HBtn>
        </HBar>
      </SheetTabs>

      <Status>
        <StatusText $ml={13}>Ready</StatusText>
        <Slot $w={17} $ml={18}><AccI /></Slot>
        <StatusText $ml={2}>Accessibility: Unavailable</StatusText>
        <Slot $w={14} $ml={1401} />
        <ViewBtn><NormalV /></ViewBtn>
        <ViewBtn><LayoutV /></ViewBtn>
        <ViewBtn $on><BreakV /></ViewBtn>
        <Slot $w={9} $ml={5}><S w={8} h={2}><line x1="0" x2="8" y1="1" y2="1" stroke="#444" strokeWidth="1.4" /></S></Slot>
        <Slot $w={0} $ml={4} />
        <Zoomer><ZoomThumb /></Zoomer>
        <Slot $w={9} $ml={6}><S w={9} h={9}><path d="M4.5 0v9M0 4.5h9" stroke="#444" /></S></Slot>
        <StatusText $ml={9}>130%</StatusText>
      </Status>
      <BottomStrip />
    </Page>
  );
}
